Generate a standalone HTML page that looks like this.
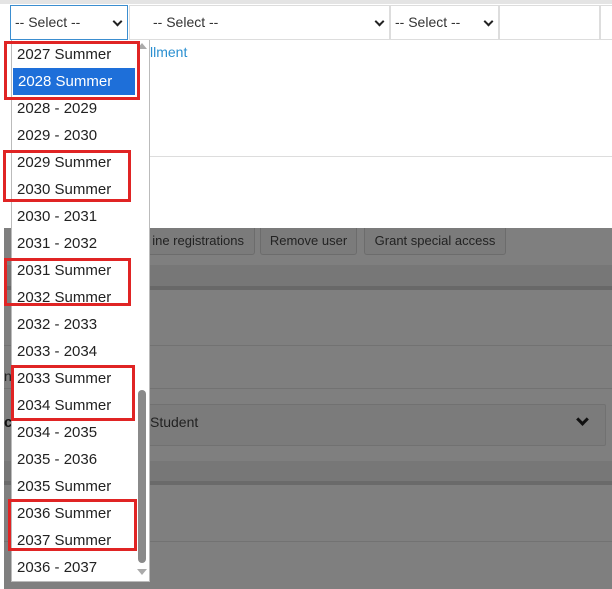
<!DOCTYPE html>
<html><head><meta charset="utf-8"><style>
*{margin:0;padding:0;box-sizing:border-box}
body{width:612px;height:589px;overflow:hidden;position:relative;background:#fff;font-family:"Liberation Sans",sans-serif;color:#222}
.a{position:absolute}
.gray{left:4px;top:228px;width:608px;height:361px;background:#7f7f7f}
.btn{top:228px;height:27px;border:1px solid #6c6c6c;border-top:none;border-radius:0 0 3px 3px;background:#7b7b7b;font-size:13px;color:#222;line-height:25px;white-space:nowrap;overflow:hidden;text-align:center}
.sel{top:5px;height:35px;border:1px solid #ddd;font-size:14px;color:#333;line-height:33px;padding-left:4px}
.chev{position:absolute;right:6px;top:12px;width:7px;height:7px;border-right:2px solid #222;border-bottom:2px solid #222;transform:rotate(45deg)}
.dd{left:11px;top:40px;width:139px;height:542px;background:#fff;border:1px solid #bbb;border-top:none}
.it{position:absolute;left:0;width:124px;height:27px;font-size:15px;line-height:27px;padding-left:5px;color:#222}
.red{position:absolute;border:3px solid #e02424}
</style></head><body>
<div class="a" style="left:0;top:0;width:612px;height:4px;background:#e4e4e4"></div>
<div class="a sel" style="left:10px;width:118px;border:1px solid #3b8ed0">-- Select --<span class="chev"></span></div>
<div class="a sel" style="left:129px;width:261px;padding-left:23px">-- Select --<span class="chev"></span></div>
<div class="a sel" style="left:390px;width:109px">-- Select --<span class="chev"></span></div>
<div class="a sel" style="left:499px;width:101px"></div>
<div class="a sel" style="left:600px;width:20px"></div>
<div class="a" style="left:150px;top:44px;font-size:14px;color:#2a8fd0">llment</div>
<div class="a" style="left:128px;top:156px;width:484px;height:1px;background:#ddd"></div>
<div class="a gray"></div>
<div class="a btn" style="left:110px;width:145px;text-align:right;padding-right:10px">ine registrations</div>
<div class="a btn" style="left:260px;width:97px">Remove user</div>
<div class="a btn" style="left:364px;width:142px">Grant special access</div>
<div class="a" style="left:4px;top:265px;width:608px;height:21px;background:#777"></div>
<div class="a" style="left:4px;top:286px;width:608px;height:4px;background:#686868"></div>
<div class="a" style="left:4px;top:345px;width:608px;height:1px;background:#727272"></div>
<div class="a" style="left:4px;top:388px;width:608px;height:1px;background:#727272"></div>
<div class="a" style="left:4px;top:368px;font-size:14px;color:#222">n</div>
<div class="a" style="left:4px;top:414px;font-size:15px;font-weight:bold;color:#111">c</div>
<div class="a" style="left:120px;top:404px;width:486px;height:42px;border:1px solid #717171;border-radius:2px;background:#7b7b7b"></div>
<div class="a" style="left:150px;top:414px;font-size:14px;color:#222">Student</div>
<div class="a" style="left:578px;top:415px;width:9px;height:9px;border-right:3px solid #111;border-bottom:3px solid #111;transform:rotate(45deg)"></div>
<div class="a" style="left:4px;top:461px;width:608px;height:20px;background:#777"></div>
<div class="a" style="left:4px;top:481px;width:608px;height:4px;background:#6a6a6a"></div>
<div class="a" style="left:4px;top:541px;width:608px;height:1px;background:#727272"></div>
<div class="a dd">
<div class="it" style="top:1px">2027 Summer</div>
<div class="it" style="top:28px;left:1px;width:122px;background:#1e6fd9;color:#fff">2028 Summer</div>
<div class="it" style="top:55px">2028 - 2029</div>
<div class="it" style="top:82px">2029 - 2030</div>
<div class="it" style="top:109px">2029 Summer</div>
<div class="it" style="top:136px">2030 Summer</div>
<div class="it" style="top:163px">2030 - 2031</div>
<div class="it" style="top:190px">2031 - 2032</div>
<div class="it" style="top:217px">2031 Summer</div>
<div class="it" style="top:244px">2032 Summer</div>
<div class="it" style="top:271px">2032 - 2033</div>
<div class="it" style="top:298px">2033 - 2034</div>
<div class="it" style="top:325px">2033 Summer</div>
<div class="it" style="top:352px">2034 Summer</div>
<div class="it" style="top:379px">2034 - 2035</div>
<div class="it" style="top:406px">2035 - 2036</div>
<div class="it" style="top:433px">2035 Summer</div>
<div class="it" style="top:460px">2036 Summer</div>
<div class="it" style="top:487px">2037 Summer</div>
<div class="it" style="top:514px">2036 - 2037</div>
<div class="a" style="left:126px;top:350px;width:8px;height:173px;border-radius:4px;background:#8a8a8a"></div>
<div class="a" style="left:125px;top:3px;width:0;height:0;border-left:5px solid transparent;border-right:5px solid transparent;border-bottom:6px solid #aaa"></div>
<div class="a" style="left:125px;top:529px;width:0;height:0;border-left:5px solid transparent;border-right:5px solid transparent;border-top:6px solid #aaa"></div>
</div>
<div class="a red" style="left:4px;top:41px;width:136px;height:59px"></div>
<div class="a red" style="left:3px;top:150px;width:128px;height:52px"></div>
<div class="a red" style="left:4px;top:258px;width:127px;height:48px"></div>
<div class="a red" style="left:11px;top:365px;width:124px;height:56px"></div>
<div class="a red" style="left:8px;top:499px;width:129px;height:52px"></div>
</body></html>
